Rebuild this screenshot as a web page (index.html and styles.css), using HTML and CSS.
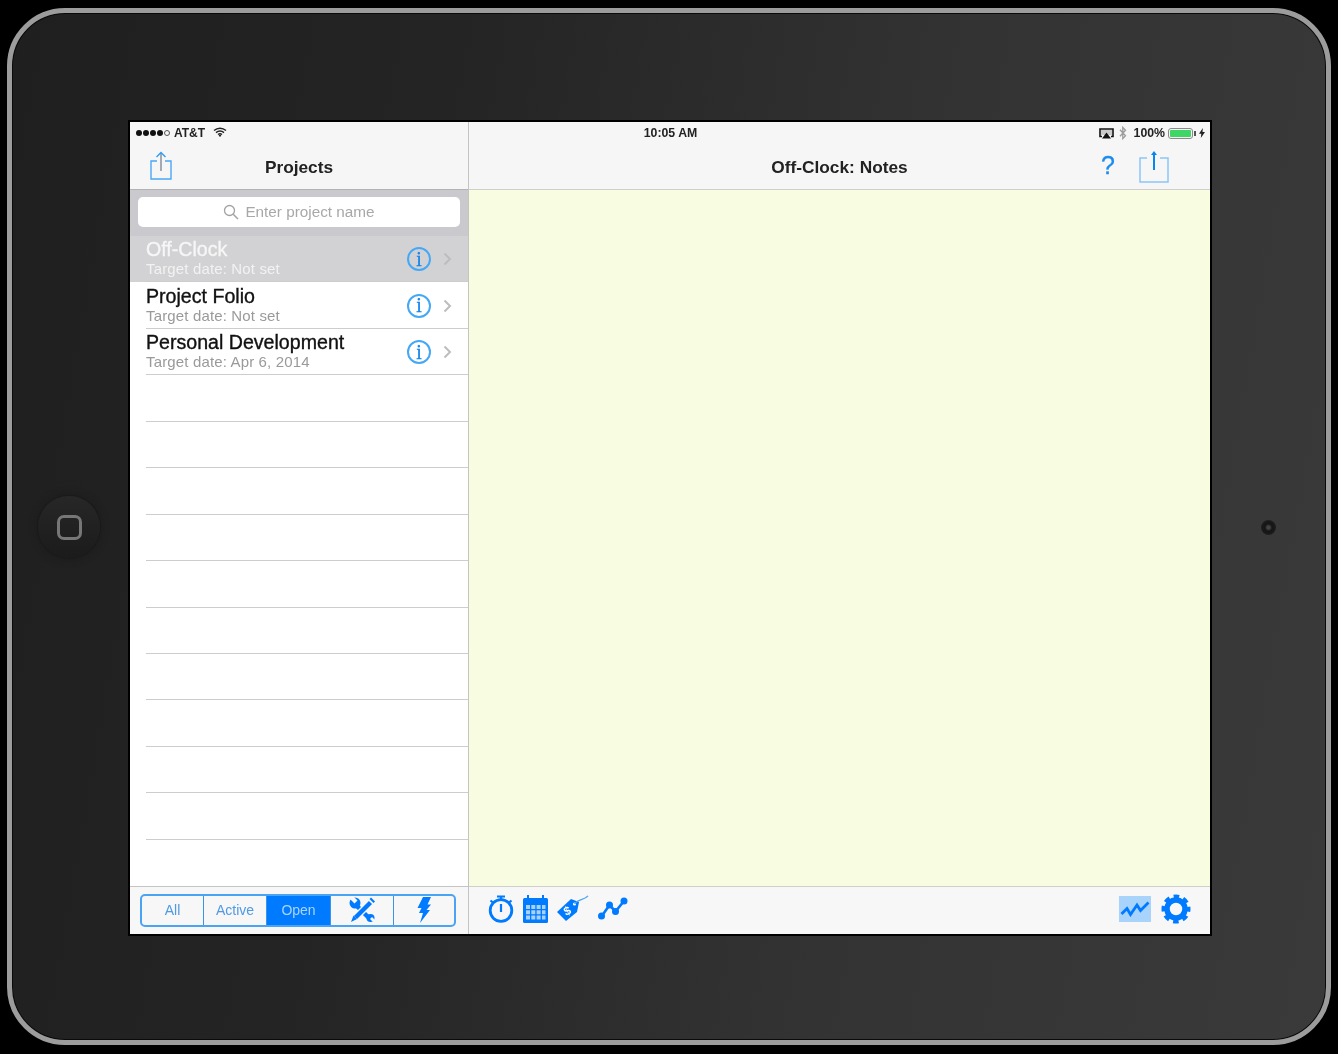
FILE: index.html
```html
<!DOCTYPE html>
<html lang="en">
<head>
<meta charset="utf-8">
<title>Off-Clock</title>
<link rel="stylesheet" href="styles.css">
</head>
<body>
<div class="device">
  <div class="home"><span class="home-glyph"></span></div>
  <div class="camera"></div>
  <div class="screen">
    <div class="status">
      <div class="status-left">
        <span class="signal"><i></i><i></i><i></i><i></i><i class="off"></i></span>
        <span>AT&amp;T</span>
        <svg class="wifi" viewBox="0 0 14 10"><path d="M1 3.600C4.500.4 9.500.4 13 3.600M3 5.600c2.400-2 5.600-2 8 0M5 7.500c1.200-.9 2.800-.9 4 0" fill="none" stroke="#222" stroke-width="1.400"/><path d="M7 10 5.600 8.500c.8-.6 2-.6 2.800 0z" fill="#222"/></svg>
      </div>
      <div class="status-time">10:05 AM</div>
      <div class="status-right">
        <svg class="airplay" viewBox="0 0 15 11"><path d="M3 8.500H1V1h13v7.500h-2" fill="none" stroke="#111" stroke-width="1.600"/><path d="M2 2h11v5H2z" fill="#777" opacity=".35"/><path d="M7.500 4.500 12 10.500H3z" fill="#111"/></svg>
        <svg class="bt" viewBox="0 0 8 14"><path d="M1 3.800 6.500 9.800 3.800 12.600V1.400L6.500 4.200 1 10.200" fill="none" stroke="#9b9b9b" stroke-width="1.300"/></svg>
        <span class="pct">100%</span>
        <span class="battery"><span class="battery-fill"></span></span>
        <svg class="bolt" viewBox="0 0 6 10"><path d="M3.800 0 0 5.800h2.300L1.800 10 6 4H3.500z" fill="#222"/></svg>
      </div>
    </div>

    <aside class="sidebar">
      <header class="navbar">
        <svg class="share-left" viewBox="0 0 24 30"><path d="M8 10H2v18h20V10h-6" fill="none" stroke="#4aa8f5" stroke-width="1.400"/><path d="M12 20V2" stroke="#808a94" stroke-width="1.400"/><path d="M7.500 6 12 1.500 16.500 6" fill="none" stroke="#2f9cf4" stroke-width="1.400"/></svg>
        <h1 class="nav-title">Projects</h1>
      </header>
      <div class="searchbar">
        <div class="searchfield">
          <svg class="search-icon" viewBox="0 0 16 16"><circle cx="6.500" cy="6.500" r="5" fill="none" stroke="#a3a3a3" stroke-width="1.300"/><path d="M10.200 10.200 15 15" stroke="#a3a3a3" stroke-width="1.500"/></svg>
          <span>Enter project name</span>
        </div>
      </div>
      <ul class="list">
        <li class="row row-selected">
          <div class="row-text"><div class="row-title">Off-Clock</div><div class="row-sub">Target date: Not set</div></div>
          <span class="info">i</span>
          <svg class="chev" viewBox="0 0 9 14"><path d="M1.500 1.500 7 7l-5.500 5.500" fill="none" stroke="#bdbdc0" stroke-width="2"/></svg>
        </li>
        <li class="row">
          <div class="row-text"><div class="row-title">Project Folio</div><div class="row-sub">Target date: Not set</div></div>
          <span class="info">i</span>
          <svg class="chev" viewBox="0 0 9 14"><path d="M1.500 1.500 7 7l-5.500 5.500" fill="none" stroke="#bdbdc0" stroke-width="2"/></svg>
        </li>
        <li class="row">
          <div class="row-text"><div class="row-title">Personal Development</div><div class="row-sub">Target date: Apr 6, 2014</div></div>
          <span class="info">i</span>
          <svg class="chev" viewBox="0 0 9 14"><path d="M1.500 1.500 7 7l-5.500 5.500" fill="none" stroke="#bdbdc0" stroke-width="2"/></svg>
        </li>
        <li class="row"></li><li class="row"></li><li class="row"></li><li class="row"></li><li class="row"></li>
        <li class="row"></li><li class="row"></li><li class="row"></li><li class="row"></li><li class="row"></li>
        <li class="row row-last"></li>
      </ul>
      <footer class="toolbar toolbar-left">
        <div class="segments">
          <div class="seg">All</div>
          <div class="seg">Active</div>
          <div class="seg seg-on">Open</div>
          <div class="seg">
            <svg class="seg-tools" viewBox="0 0 26 26">
              <path d="M6 7 21 22" stroke="#007aff" stroke-width="4.500"/>
              <circle cx="6" cy="6" r="5.500" fill="#007aff"/>
              <path d="M4 -1 8.500 3.500 5.500 6.500 1 2z" fill="#f7f7f7"/>
              <circle cx="21.500" cy="21" r="4" fill="#007aff"/>
              <path d="M21 22 24 25 26 23 23 20z" fill="#f7f7f7"/>
              <path d="M21.500 5.500 6.500 20.500" stroke="#f7f7f7" stroke-width="7"/>
              <path d="M21.500 5.500 6.500 20.500" stroke="#007aff" stroke-width="4.500"/>
              <path d="M20.500 2 22 .5l4 4L24.500 6zM4.500 18.500l3.500 3.500L2 25z" fill="#007aff"/>
            </svg>
          </div>
          <div class="seg">
            <svg class="seg-bolt" viewBox="0 0 16 26"><path d="M7 0h8l-3.500 7.500H15L10.500 13H14L4 26l3-10H3l2.500-5H1.500z" fill="#007aff"/></svg>
          </div>
        </div>
      </footer>
    </aside>

    <main class="detail">
      <header class="navbar navbar-right">
        <h1 class="nav-title">Off-Clock: Notes</h1>
        <div class="nav-actions">
          <span class="help">?</span>
          <svg class="share-right" viewBox="0 0 32 34"><path d="M9 9H2v24h28V9h-8" fill="none" stroke="#8cc6f7" stroke-width="1.500"/><path d="M16 21V4" stroke="#0a84f0" stroke-width="2"/><path d="M13 6l3-4 3 4z" fill="#0a84f0"/></svg>
        </div>
      </header>
      <section class="note"></section>
      <footer class="toolbar toolbar-right">
        <div class="tool-group">
          <svg class="t-watch" viewBox="0 0 26 28"><circle cx="13" cy="15.500" r="10.800" fill="none" stroke="#007aff" stroke-width="2.800"/><path d="M13 9v8" stroke="#007aff" stroke-width="2.200"/><path d="M9 1.500h8M13 1.500V4M2.500 5.500l3 2.500M23.500 5.500l-3 2.500" stroke="#007aff" stroke-width="2.200"/></svg>
          <svg class="t-cal" viewBox="0 0 25 28"><rect x="0" y="3" width="25" height="25" rx="1.500" fill="#007aff"/><path d="M5 0v5M20 0v5" stroke="#007aff" stroke-width="2"/><path d="M3 10h4v4H3zM8.300 10h4v4h-4zM13.600 10h4v4h-4zM19 10h3.500v4H19zM3 15.300h4v4H3zM8.300 15.300h4v4h-4zM13.600 15.300h4v4h-4zM19 15.300h3.500v4H19zM3 20.600h4v4H3zM8.300 20.600h4v4h-4zM13.600 20.600h4v4h-4zM19 20.600h3.500v4H19z" fill="#a9d2fa"/></svg>
          <svg class="t-tag" viewBox="0 0 32 27"><path d="M0 17 14 4l8 3-2 10L9 26z" fill="#007aff"/><circle cx="17.500" cy="9" r="1.600" fill="#fff"/><path d="M17.500 9C21 4 27 5.500 31 .8" fill="none" stroke="#4aa3f7" stroke-width="1.300"/><text class="tag-s" x="7" y="20" transform="rotate(-25 10 16)">$</text></svg>
          <svg class="t-line" viewBox="0 0 30 23"><path d="M3.500 19.500 11.500 8l6 6.500L26 4" fill="none" stroke="#007aff" stroke-width="2.600"/><circle cx="3.500" cy="19" r="3.500" fill="#007aff"/><circle cx="11.500" cy="8" r="3.500" fill="#007aff"/><circle cx="17.500" cy="14.500" r="3.500" fill="#007aff"/><circle cx="26" cy="4" r="3.500" fill="#007aff"/></svg>
        </div>
        <div class="tool-group tool-group-end">
          <span class="chart-on">
            <svg class="t-chart" viewBox="0 0 30 16"><path d="M1.500 13 7 7.500l3.500 6L17 4l3.500 5.500L28.500 1.500" fill="none" stroke="#007aff" stroke-width="2.800"/></svg>
          </span>
          <svg class="t-gear" viewBox="0 0 30 30"><circle cx="15" cy="15" r="9" fill="none" stroke="#007aff" stroke-width="5.500"/><circle class="gear-teeth" cx="15" cy="15" r="12.500" fill="none" stroke="#007aff" stroke-width="4"/></svg>
        </div>
      </footer>
    </main>
  </div>
</div>
</body>
</html>
```

FILE: styles.css
```css
* { box-sizing: border-box; margin: 0; padding: 0; }
html, body { width: 1338px; height: 1054px; overflow: hidden; background: #000; }
body { font-family: "Liberation Sans", Arial, sans-serif; }

.device {
  position: relative;
  width: 1324px;
  height: 1037px;
  margin: 8px 7px 0;
  padding: 107px 111px 102px 116px;
  border: 5px solid #9c9c9c;
  border-radius: 58px;
  background: linear-gradient(100deg, #1f1f1f 0%, #242424 30%, #333 65%, #3a3a3a 100%);
  box-shadow: inset 0 0 0 1px #0a0a0a;
}

.home {
  position: absolute;
  left: 26px;
  top: 483px;
  width: 62px;
  height: 62px;
  display: flex;
  align-items: center;
  justify-content: center;
  border-radius: 50%;
  background: linear-gradient(180deg, #272727, #1b1b1b);
  box-shadow: 0 0 0 1px #1a1a1a, 0 0 8px #191919;
}
.home-glyph { width: 25px; height: 25px; border: 3px solid #777; border-radius: 7px; filter: blur(0.5px); }

.camera {
  position: absolute;
  left: 1249px;
  top: 507px;
  width: 15px;
  height: 15px;
  border-radius: 50%;
  filter: blur(0.6px);
  background: radial-gradient(circle, #444 0 12%, #151515 35%, #1a1a1a 60%, #2c2c2c 100%);
}

.screen {
  position: relative;
  display: flex;
  width: 1084px;
  height: 816px;
  border: 2px solid #000;
  background: #fff;
  filter: blur(0.45px);
}

.status {
  position: absolute;
  z-index: 1;
  left: 0;
  right: 0;
  top: 0;
  height: 22px;
  display: grid;
  grid-template-columns: 1fr auto 1fr;
  align-items: center;
  padding: 0 5px 0 6px;
  font-size: 12.300px;
  color: #222;
}
.status-left { display: flex; align-items: center; gap: 4px; font-weight: bold; font-size: 12px; }
.status-time { font-weight: bold; }
.status-right { display: flex; align-items: center; justify-content: flex-end; }
.signal { display: flex; gap: 1px; }
.signal i { width: 6px; height: 6px; border-radius: 50%; background: #111; }
.signal i.off { background: none; border: 1px solid #555; }
.wifi { width: 14px; height: 10px; margin: -2px 0 0 4px; }
.airplay { width: 15px; height: 11px; margin-right: 5px; }
.bt { width: 8px; height: 14px; margin-right: 7px; }
.pct { font-weight: bold; margin-right: 3px; }
.battery { position: relative; width: 25px; height: 11px; padding: 1px; border: 1px solid #8a8a8a; border-radius: 3px; margin-right: 3px; }
.battery-fill { display: block; height: 100%; background: #3ed664; border-radius: 1px; }
.battery::after { content: ""; position: absolute; right: -4px; top: 2px; width: 2px; height: 5px; background: #555; }
.bolt { width: 6px; height: 10px; margin-left: 3px; }

.navbar {
  position: relative;
  flex: none;
  height: 68px;
  padding-top: 24px;
  display: flex;
  align-items: center;
  justify-content: center;
  background: #f6f6f6;
  border-bottom: 1px solid #b2b2b4;
}
.navbar-right { border-bottom-color: #cfcfcb; }
.nav-title { font-size: 17.300px; font-weight: bold; color: #222; }
.share-left { position: absolute; left: 19px; top: 29px; width: 24px; height: 30px; }
.nav-actions { position: absolute; right: 0; top: 22px; bottom: 0; }
.help { position: absolute; right: 95px; top: 7px; font-size: 25px; color: #1a8cf0; -webkit-text-stroke: .3px #1a8cf0; }
.share-right { position: absolute; right: 40px; top: 5px; width: 32px; height: 34px; }

.sidebar {
  width: 339px;
  flex: none;
  display: flex;
  flex-direction: column;
  border-right: 1px solid #c4c4c4;
}
.searchbar { flex: none; height: 46px; padding: 7px 8px 9px; background: #c9c9ce; }
.searchfield {
  height: 30px;
  display: flex;
  align-items: center;
  justify-content: center;
  gap: 6px;
  border-radius: 5px;
  background: #fff;
  font-size: 15.300px;
  color: #a8a8a8;
}
.search-icon { width: 16px; height: 16px; }

.list { flex: 1; list-style: none; }
.row {
  position: relative;
  height: 46.450px;
  display: flex;
  align-items: center;
  padding-left: 16px;
  background: #fff;
}
.row::after {
  content: "";
  position: absolute;
  left: 16px;
  right: 0;
  bottom: 0;
  height: 1px;
  background: #cdcdcd;
}
.row-last::after { display: none; }
.row-selected { background: #d2d2d5; }
.row-text { flex: 1; margin-top: -2px; }
.row-title { font-size: 19.600px; line-height: 22px; color: #111; -webkit-text-stroke: .35px #111; }
.row-sub { font-size: 15px; line-height: 18px; letter-spacing: .15px; color: #9a9a9a; }
.row-selected .row-title { color: #f6f6f6; -webkit-text-stroke: .35px #f6f6f6; }
.row-selected .row-sub { color: #f2f2f2; }
.info {
  width: 24px;
  height: 24px;
  margin-right: 12px;
  display: flex;
  align-items: center;
  justify-content: center;
  border: 2px solid #45a8f5;
  border-radius: 50%;
  font-family: "Liberation Serif", serif;
  font-size: 20px;
  color: #1585ec;
  -webkit-text-stroke: .3px #1585ec;
}
.chev { width: 9px; height: 14px; margin-right: 16px; }

.toolbar { flex: none; height: 48px; background: #f7f7f7; border-top: 1px solid #c4c4c4; }
.toolbar-left { padding: 7px 10px; }
.segments {
  display: grid;
  grid-template-columns: 61px 63px 64px 63px 1fr;
  height: 33px;
  width: 316px;
  border: 2px solid #4ba3f3;
  border-radius: 5px;
  overflow: hidden;
}
.seg {
  display: flex;
  align-items: center;
  justify-content: center;
  font-size: 14px;
  color: #5099e4;
  border-left: 1px solid #3d93e6;
  padding-bottom: 2px;
}
.seg:first-child { border-left: 0; }
.seg-on { background: #007aff; color: #a9d4ff; }
.seg-tools { width: 26px; height: 26px; }
.seg-bolt { width: 16px; height: 26px; }

.detail { flex: 1; display: flex; flex-direction: column; min-width: 0; }
.note { flex: 1; background: #f8fde2; }
.toolbar-right {
  display: flex;
  justify-content: space-between;
  align-items: center;
  padding: 0 19px 4px 19px;
  border-top-color: #cfcfcb;
}
.tool-group { display: flex; align-items: center; gap: 9px; }
.tool-group-end { gap: 10px; }
.t-watch { width: 26px; height: 28px; }
.t-cal { width: 25px; height: 28px; }
.t-tag { width: 32px; height: 27px; }
.t-line { width: 30px; height: 23px; }
.tag-s { font-family: "Liberation Sans", sans-serif; font-size: 12px; font-weight: bold; fill: #fff; }
.chart-on { display: flex; align-items: center; justify-content: center; width: 32px; height: 26px; background: #a8d3fa; }
.t-chart { width: 30px; height: 16px; }
.t-gear { width: 30px; height: 30px; }
.gear-teeth { stroke-dasharray: 5.500 4.320; stroke-dashoffset: 2.750; }
```
